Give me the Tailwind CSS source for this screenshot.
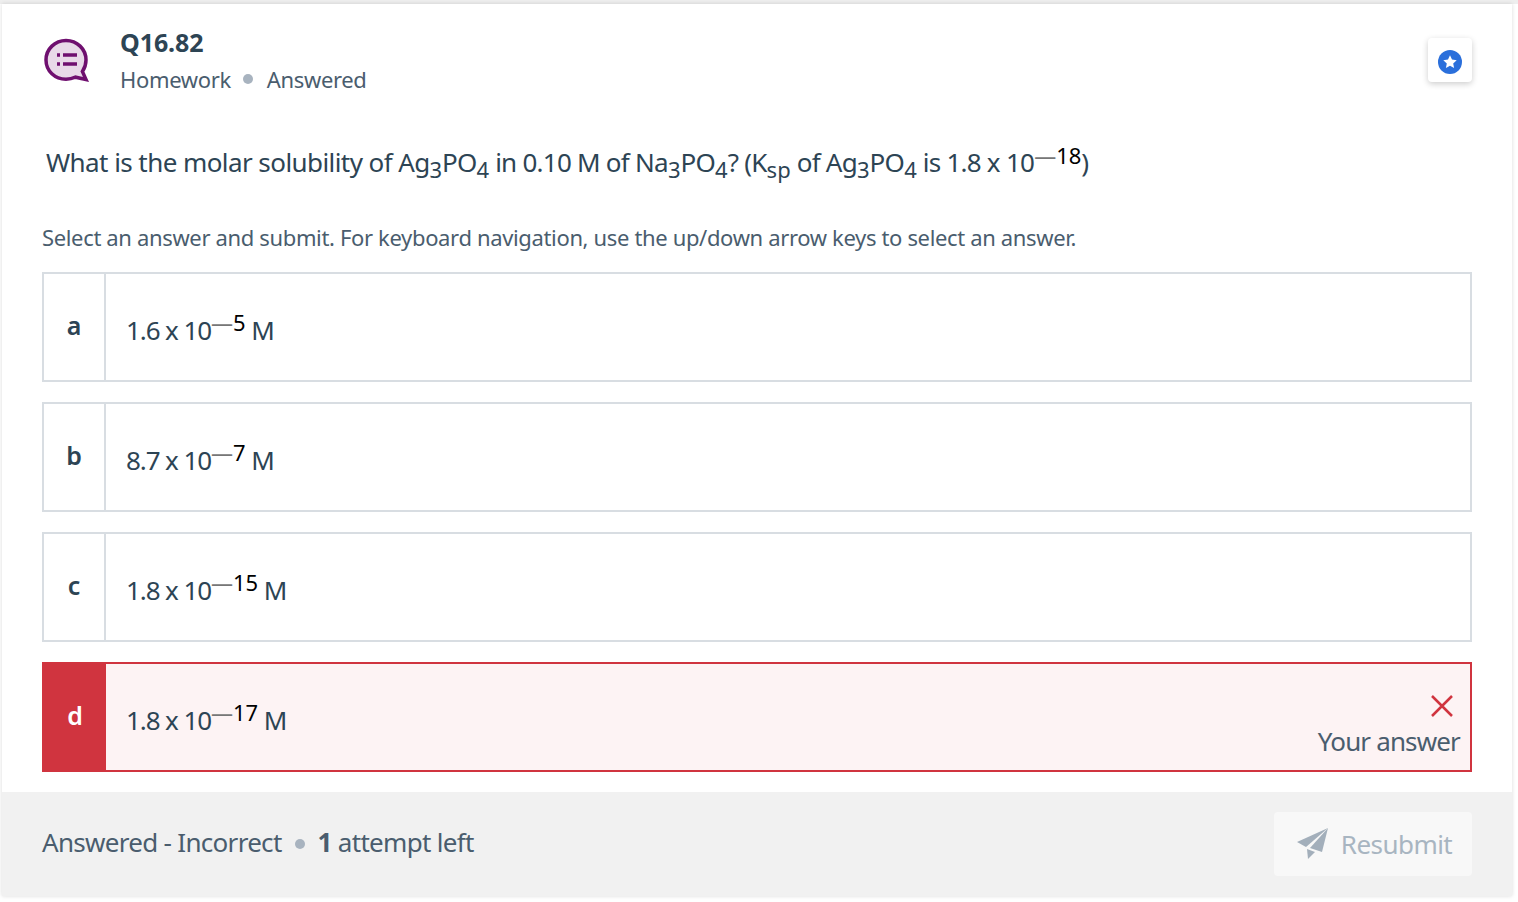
<!DOCTYPE html>
<html lang="en">
<head>
  <meta charset="UTF-8">
  <title>Q16.82</title>
  <script src="https://cdn.jsdelivr.net/npm/@tailwindcss/browser@4"></script>
</head>
<body class="bg-white h-[902px] overflow-hidden font-['Noto_Sans',sans-serif] text-[#2d4454]">
  <div class="h-[4px] bg-[#eeeeee]"></div>
  <!-- Question card -->
  <div class="relative mx-[2px] w-[1510px] h-[892px] flex flex-col bg-white shadow-[0_0_4px_rgba(0,0,0,0.15)]">
    <!-- Header -->
    <div class="flex justify-between pl-[40px] pr-[40px] pt-[21px] h-[131px]">
      <div class="flex">
        <svg class="mt-[12px]" width="48" height="48" viewBox="0 0 48 48">
          <path d="M24 3.500C35 3.500 44 12 44 23c0 4.500-1.400 8.300-3.600 11.500L44 42.500l-10.500-2.300c-3 1.300-6 2-9.500 2C13 42.200 4 34 4 23S13 3.500 24 3.500z" fill="#e8d9e8" stroke="#6f0f6f" stroke-width="3.500"/>
          <path d="M21 18h14M21 27h14" stroke="#6f0f6f" stroke-width="3.500"/>
          <path d="M15 18h3M15 27h3" stroke="#6f0f6f" stroke-width="3.500"/>
        </svg>
        <div class="ml-[30px]">
          <div class="text-[25px] leading-[34px] font-bold tracking-[-0.1px]">Q16.82</div>
          <div class="mt-[4px] flex items-center text-[22px] leading-[32px] text-[#4a5d6e] tracking-[-0.35px]">
            <span>Homework</span>
            <span class="mx-[12px] w-[10px] h-[10px] rounded-full bg-[#a8b3bf]"></span>
            <span class="ml-[2px]">Answered</span>
          </div>
        </div>
      </div>
      <div class="mt-[13px] w-[44px] h-[44px] pt-[4px] flex items-center justify-center rounded bg-white shadow-[0_2px_6px_rgba(0,0,0,0.2)]">
        <svg width="24" height="24" viewBox="0 0 24 24">
          <circle cx="12" cy="12" r="12" fill="#2a6fdb"/>
          <path d="M12 5.300l2 4.300 4.700.6-3.500 3.200.9 4.700-4.100-2.300-4.100 2.300.9-4.700-3.500-3.200 4.700-.6z" fill="#fff"/>
        </svg>
      </div>
    </div>

    <!-- Question -->
    <div class="pl-[44px] h-[85px] text-[26px] leading-[54px] tracking-[-0.75px] whitespace-nowrap">
      <span class="tracking-[-0.57px]">What is the molar solubility of </span>Ag<sub class="text-[22px] tracking-normal">3</sub>PO<sub class="text-[22px] tracking-normal">4</sub> in 0.10 M of Na<sub class="text-[22px] tracking-normal">3</sub>PO<sub class="text-[22px] tracking-normal">4</sub>? (K<sub class="text-[22px] tracking-normal">sp</sub> of Ag<sub class="text-[22px] tracking-normal">3</sub>PO<sub class="text-[22px] tracking-normal">4</sub> is 1.8 x 10<sup class="top-[-0.37em] text-[22px] tracking-normal text-black"><span class="text-[#777]">—</span>18</sup>)
    </div>

    <!-- Prompt -->
    <div class="pl-[40px] h-[52px] text-[22px] leading-[34px] tracking-[-0.35px] text-[#4a5d6e] whitespace-nowrap">Select an answer and submit. For keyboard navigation, use the up/down arrow keys to select an answer.</div>

    <!-- Answers -->
    <div class="mx-[40px] flex flex-col gap-[20px]">
      <div class="h-[110px] flex border-2 border-[#d8dde2]">
        <div class="w-[62px] flex items-center justify-center border-r-2 border-[#d8dde2] text-[25px] font-semibold pb-[2px]">a</div>
        <div class="pl-[20px] pt-[37px] text-[26px] leading-[38px] tracking-[-1.1px]">1.6 x 10<sup class="top-[-0.4em] text-[22px] tracking-normal text-black"><span class="text-[#777]">—</span>5</sup> M</div>
      </div>
      <div class="h-[110px] flex border-2 border-[#d8dde2]">
        <div class="w-[62px] flex items-center justify-center border-r-2 border-[#d8dde2] text-[25px] font-semibold pb-[2px]">b</div>
        <div class="pl-[20px] pt-[37px] text-[26px] leading-[38px] tracking-[-1.1px]">8.7 x 10<sup class="top-[-0.4em] text-[22px] tracking-normal text-black"><span class="text-[#777]">—</span>7</sup> M</div>
      </div>
      <div class="h-[110px] flex border-2 border-[#d8dde2]">
        <div class="w-[62px] flex items-center justify-center border-r-2 border-[#d8dde2] text-[25px] font-semibold pb-[2px]">c</div>
        <div class="pl-[20px] pt-[37px] text-[26px] leading-[38px] tracking-[-1.1px]">1.8 x 10<sup class="top-[-0.4em] text-[22px] tracking-normal text-black"><span class="text-[#777]">—</span>15</sup> M</div>
      </div>
      <div class="h-[110px] flex border-2 border-[#d0343f] bg-[#fdf3f4]">
        <div class="w-[62px] flex items-center justify-center bg-[#d0343f] text-white text-[25px] font-semibold pb-[2px]">d</div>
        <div class="pl-[20px] pt-[37px] text-[26px] leading-[38px] tracking-[-1.1px]">1.8 x 10<sup class="top-[-0.4em] text-[22px] tracking-normal text-black"><span class="text-[#777]">—</span>17</sup> M</div>
        <div class="ml-auto pr-[10px] pt-[30px] flex flex-col items-end">
          <svg class="mr-[6px]" width="24" height="24" viewBox="0 0 24 24">
            <path d="M2 2l20 20M22 2L2 22" stroke="#d0343f" stroke-width="2.500" fill="none"/>
          </svg>
          <div class="text-[26px] leading-[36px] mt-[5px] tracking-[-0.85px] text-[#4a5d6e]">Your answer</div>
        </div>
      </div>
    </div>

    <!-- Footer -->
    <div class="mt-[20px] flex-1 flex items-center justify-between pl-[40px] pr-[40px] bg-[#f1f1f1]">
      <div class="mb-[4px] flex items-center text-[26px] tracking-[-0.7px] text-[#4a5d6e]">
        <span>Answered - Incorrect</span>
        <span class="ml-[13px] mr-[13px] mt-[4px] w-[10px] h-[10px] rounded-full bg-[#a8b3bf]"></span>
        <span><b class="font-bold">1</b> attempt left</span>
      </div>
      <div class="w-[198px] h-[64px] pl-[3px] flex items-center justify-center gap-[12px] rounded bg-[#f8f8f8] text-[26px] tracking-[-0.55px] text-[#a8b5c1]">
        <svg width="32" height="32" viewBox="0 0 32 32">
          <path d="M31 0L0 14l9 5z" fill="#a3afbb"/>
          <path d="M31 0L13 20l12 4z" fill="#a3afbb"/>
          <path d="M10 21l1 10 7-7z" fill="#a3afbb"/>
        </svg>
        <span>Resubmit</span>
      </div>
    </div>
  </div>
</body>
</html>
